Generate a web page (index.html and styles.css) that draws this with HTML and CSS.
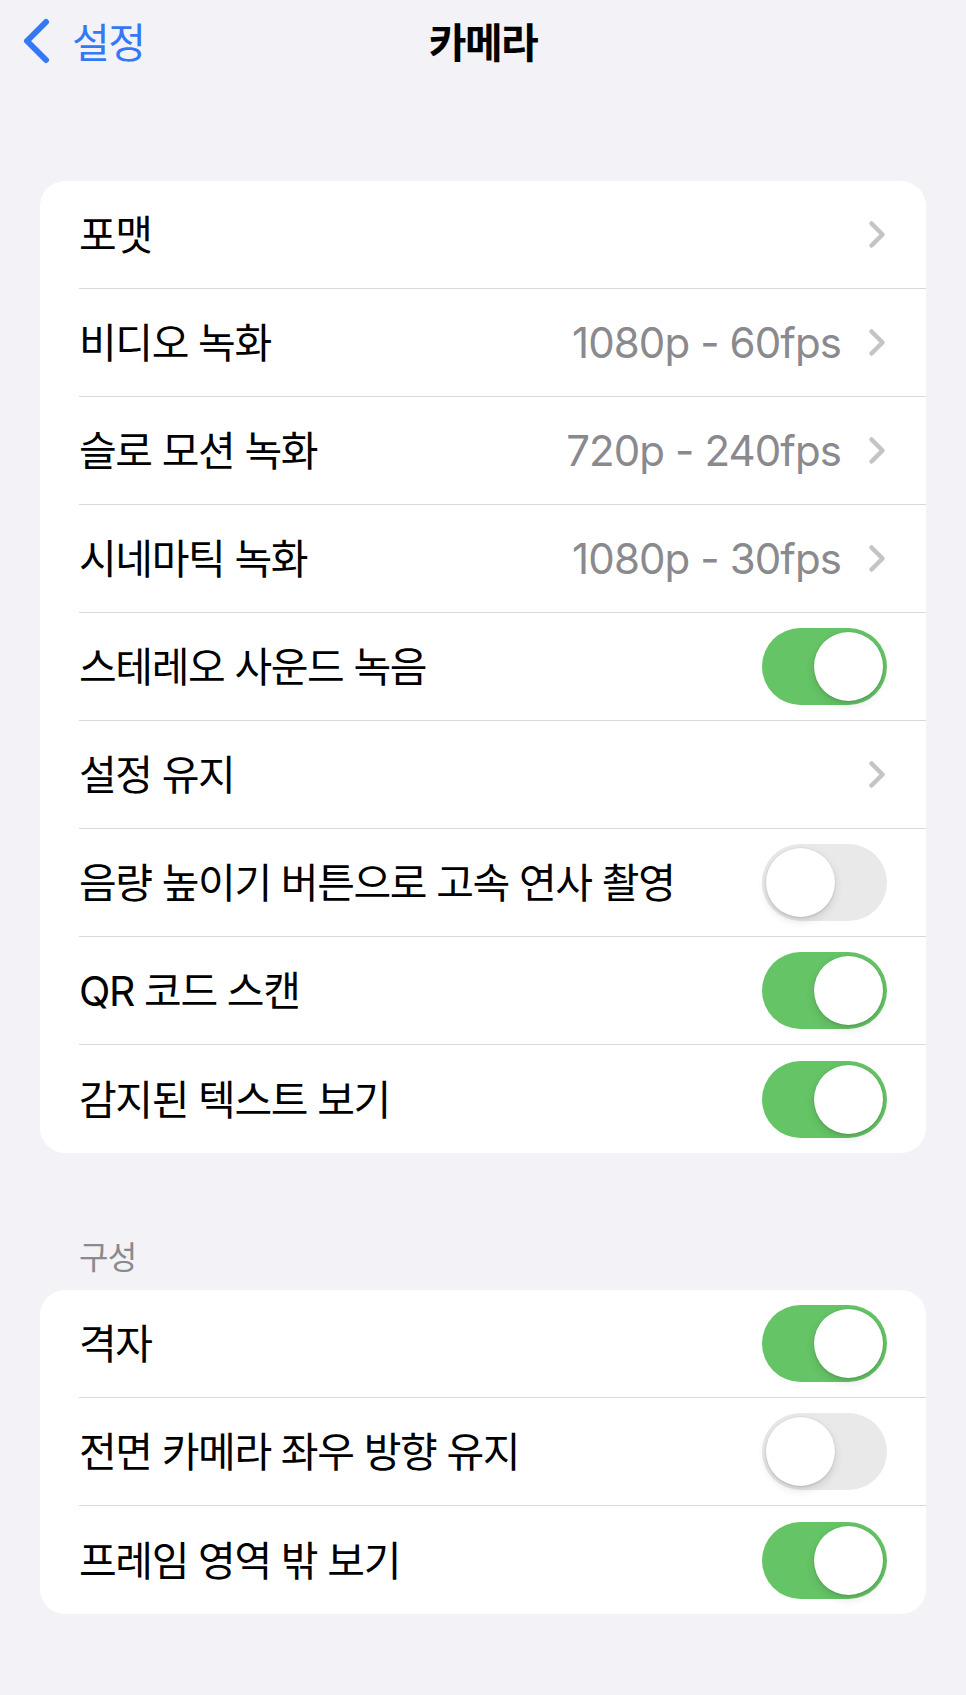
FILE: index.html
```html
<!DOCTYPE html>
<html lang="ko">
<head>
<meta charset="utf-8">
<title>카메라</title>
<link rel="stylesheet" href="styles.css">
</head>
<body>
<header class="nav">
  <a class="back">
    <svg class="back-chev" width="30" height="46" viewBox="0 0 30 46"><path d="M25 4 L6 23 L25 42" fill="none" stroke="#3478f6" stroke-width="6" stroke-linecap="round" stroke-linejoin="round"/></svg>
    <span class="back-label">설정</span>
  </a>
  <h1 class="title">카메라</h1>
</header>

<main class="content">
  <section class="card first">
    <div class="row"><div class="row-inner"><span class="label">포맷</span><span class="accessory"><svg class="chev" width="18" height="29" viewBox="0 0 18 29"><path d="M3.5 3.5 L14.5 14.5 L3.5 25.5" fill="none" stroke="#c4c4c7" stroke-width="4.5" stroke-linecap="round" stroke-linejoin="round"/></svg></span></div></div>
    <div class="row"><div class="row-inner"><span class="label">비디오 녹화</span><span class="accessory"><span class="detail">1080p - 60fps</span><svg class="chev" width="18" height="29" viewBox="0 0 18 29"><path d="M3.5 3.5 L14.5 14.5 L3.5 25.5" fill="none" stroke="#c4c4c7" stroke-width="4.5" stroke-linecap="round" stroke-linejoin="round"/></svg></span></div></div>
    <div class="row"><div class="row-inner"><span class="label">슬로 모션 녹화</span><span class="accessory"><span class="detail">720p - 240fps</span><svg class="chev" width="18" height="29" viewBox="0 0 18 29"><path d="M3.5 3.5 L14.5 14.5 L3.5 25.5" fill="none" stroke="#c4c4c7" stroke-width="4.5" stroke-linecap="round" stroke-linejoin="round"/></svg></span></div></div>
    <div class="row"><div class="row-inner"><span class="label">시네마틱 녹화</span><span class="accessory"><span class="detail">1080p - 30fps</span><svg class="chev" width="18" height="29" viewBox="0 0 18 29"><path d="M3.5 3.5 L14.5 14.5 L3.5 25.5" fill="none" stroke="#c4c4c7" stroke-width="4.5" stroke-linecap="round" stroke-linejoin="round"/></svg></span></div></div>
    <div class="row"><div class="row-inner"><span class="label">스테레오 사운드 녹음</span><span class="toggle on"><span class="thumb"></span></span></div></div>
    <div class="row"><div class="row-inner"><span class="label">설정 유지</span><span class="accessory"><svg class="chev" width="18" height="29" viewBox="0 0 18 29"><path d="M3.5 3.5 L14.5 14.5 L3.5 25.5" fill="none" stroke="#c4c4c7" stroke-width="4.5" stroke-linecap="round" stroke-linejoin="round"/></svg></span></div></div>
    <div class="row"><div class="row-inner"><span class="label">음량 높이기 버튼으로 고속 연사 촬영</span><span class="toggle off"><span class="thumb"></span></span></div></div>
    <div class="row"><div class="row-inner"><span class="label">QR 코드 스캔</span><span class="toggle on"><span class="thumb"></span></span></div></div>
    <div class="row"><div class="row-inner"><span class="label">감지된 텍스트 보기</span><span class="toggle on"><span class="thumb"></span></span></div></div>
  </section>

  <h2 class="section-header">구성</h2>
  <section class="card">
    <div class="row"><div class="row-inner"><span class="label">격자</span><span class="toggle on"><span class="thumb"></span></span></div></div>
    <div class="row"><div class="row-inner"><span class="label">전면 카메라 좌우 방향 유지</span><span class="toggle off"><span class="thumb"></span></span></div></div>
    <div class="row"><div class="row-inner"><span class="label">프레임 영역 밖 보기</span><span class="toggle on"><span class="thumb"></span></span></div></div>
  </section>
</main>
</body>
</html>
```

FILE: styles.css
```css
* { box-sizing: border-box; }

html, body {
  margin: 0;
  padding: 0;
  background: #f2f2f7;
}

body {
  font-family: Inter, "Noto Sans CJK KR", sans-serif;
  color: #000;
  width: 966px;
  min-height: 1695px;
}

.nav {
  position: relative;
  height: 82px;
  display: flex;
  align-items: center;
  justify-content: center;
}

.back {
  position: absolute;
  left: 21px;
  top: 0;
  height: 82px;
  display: flex;
  align-items: center;
  gap: 21px;
  color: #3478f6;
}

.back-chev { display: block; }

.back-label {
  font-family: "Noto Sans CJK KR", sans-serif;
  font-size: 41px;
  line-height: 1;
  letter-spacing: -1.5px;
  margin-top: -2px;
}

.title {
  margin: 0;
  font-family: "Noto Sans CJK KR", sans-serif;
  font-size: 41px;
  font-weight: 700;
  line-height: 1;
  letter-spacing: -1.5px;
  margin-top: -2px;
}

.content {
  padding: 99px 40px 0;
}

.card {
  background: #fff;
  border-radius: 25px;
  overflow: hidden;
}

.row {
  padding-left: 39px;
  height: 108px;
}

.row-inner {
  height: 108px;
  display: flex;
  align-items: center;
  justify-content: space-between;
  padding-right: 39px;
  border-bottom: 1px solid #d9d9dc;
}

.row:last-child .row-inner { border-bottom: none; }

.label {
  font-size: 41px;
  line-height: 1;
  letter-spacing: -1.4px;
  white-space: nowrap;
  margin-top: 2px;
}

.accessory {
  display: flex;
  align-items: center;
  margin-right: 1px;
}

.detail {
  font-size: 42px;
  line-height: 1;
  color: #8a8a8e;
  margin-right: 27px;
  letter-spacing: -0.9px;
}

.chev { display: block; }

.toggle {
  position: relative;
  width: 125px;
  height: 77px;
  border-radius: 39px;
  flex: none;
}

.toggle.on { background: #65c466; }
.toggle.off { background: #e9e9ea; }

.thumb {
  position: absolute;
  top: 4px;
  width: 69px;
  height: 69px;
  border-radius: 50%;
  background: #fff;
  box-shadow: 0 4px 10px rgba(0, 0, 0, 0.12), 0 2px 2px rgba(0, 0, 0, 0.06), 0 0 0 1px rgba(0, 0, 0, 0.04);
}

.toggle.on .thumb { right: 4px; }
.toggle.off .thumb { left: 4px; }

.section-header {
  margin: 82px 0 15px 39px;
  font-family: "Noto Sans CJK KR", sans-serif;
  font-size: 32px;
  font-weight: 400;
  line-height: 40px;
  letter-spacing: -0.8px;
  color: #8a8a8e;
}
```
